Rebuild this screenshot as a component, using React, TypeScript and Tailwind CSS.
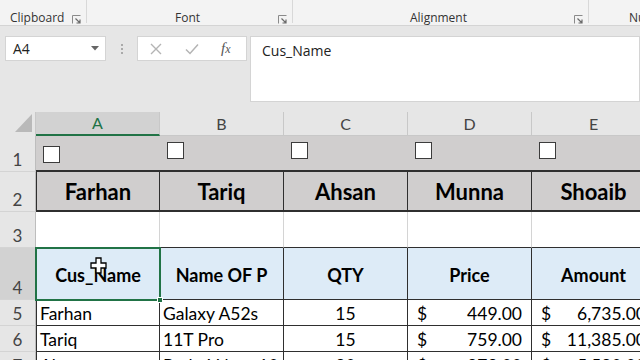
import React from "react";

const UI = { fontFamily: '"Open Sans", "Noto Sans", sans-serif' };
const CELL = { fontFamily: 'Lato, "Open Sans", sans-serif' };

function Launcher() {
  return (
    <svg width="9" height="9" viewBox="0 0 9 9" className="shrink-0">
      <path d="M0.5 8.5 V0.5 H8.5" fill="none" stroke="#8a8a8a" strokeWidth="1" />
      <path d="M3.5 3.5 L8 8 M8 4.5 V8 H4.5" fill="none" stroke="#6a6a6a" strokeWidth="1.2" />
    </svg>
  );
}

function Check() {
  return <div className="w-[17px] h-[17px] bg-white border border-[#3c3c3c]" />;
}

export default function App() {
  const dark = "border-[#2f2f2f]";
  const rowsData: { n: string; cells: string[] }[] = [
    { n: "5", cells: ["Farhan", "Galaxy A52s", "15", "449.00", "6,735.00"] },
    { n: "6", cells: ["Tariq", "11T Pro", "15", "759.00", "11,385.00"] },
    { n: "7", cells: ["Ahsan", "Redmi Note 10 Pro", "20", "279.00", "5,580.00"] },
  ];

  const rowHeader = (n: string, h: string, selected = false) => (
    <div
      className={`w-[36px] shrink-0 ${h} flex items-end justify-center pb-[1px] border-r border-b border-r-[#bdbdbd] border-b-[#d4d4d4] ${
        selected ? "bg-[#d2d2d2]" : "bg-[#e6e6e6]"
      } text-[#444] text-[17px] leading-[20px]`}
      style={CELL}
    >
      {n}
    </div>
  );

  return (
    <div className="w-[640px] h-[360px] overflow-hidden bg-[#e6e6e6] relative select-none">
      {/* Ribbon group labels */}
      <div className="h-[26px] bg-[#f3f3f3] border-b border-[#d4d4d4] flex items-start text-[12px] leading-[16px] text-[#333]" style={UI}>
        <div className="w-[87px] shrink-0 h-[23px] border-r border-[#d8d8d8] flex items-start pt-[10px] pl-[10px] pr-[5px] justify-between">
          <span>Clipboard</span>
          <div className="mt-[5px]"><Launcher /></div>
        </div>
        <div className="w-[206px] shrink-0 h-[23px] border-r border-[#d8d8d8] flex items-start pt-[10px] pr-[5px]">
          <span className="flex-1 text-center pl-[10px]">Font</span>
          <div className="mt-[5px]"><Launcher /></div>
        </div>
        <div className="w-[296px] shrink-0 h-[23px] border-r border-[#d8d8d8] flex items-start pt-[10px] pr-[5px]">
          <span className="flex-1 text-center pl-[10px]">Alignment</span>
          <div className="mt-[5px]"><Launcher /></div>
        </div>
        <div className="flex-1 flex items-start pt-[10px] pl-[40px] whitespace-nowrap">
          <span>Nu</span>
        </div>
      </div>

      {/* Formula bar */}
      <div className="h-[86px] flex items-start pt-[10px] pl-[5px]" style={UI}>
        <div className="w-[101px] h-[25px] bg-white border border-[#d4d4d4] flex items-center justify-between pl-[7px] pr-[6px] text-[14px] text-[#222]">
          <span>A4</span>
          <svg width="8" height="5" viewBox="0 0 8 5"><path d="M0 0 H8 L4 4.5 Z" fill="#666" /></svg>
        </div>
        <div className="w-[31px] h-[25px] flex flex-col items-center justify-center gap-[2px]">
          <div className="w-[2px] h-[2px] bg-[#aaa]" />
          <div className="w-[2px] h-[2px] bg-[#aaa]" />
          <div className="w-[2px] h-[2px] bg-[#aaa]" />
        </div>
        <div className="w-[110px] h-[25px] bg-white border border-[#d4d4d4] flex items-center pl-[12px]">
          <svg width="12" height="12" viewBox="0 0 12 12"><path d="M1 1 L11 11 M11 1 L1 11" stroke="#b4b4b4" strokeWidth="1.4" /></svg>
          <svg className="ml-[23px]" width="14" height="12" viewBox="0 0 14 12"><path d="M1 6.5 L5 10.5 L13 1.5" stroke="#b4b4b4" strokeWidth="1.5" fill="none" /></svg>
          <span className="ml-[22px] text-[15px] text-[#555] italic" style={{ fontFamily: '"Liberation Serif", serif' }}>
            f<span className="text-[12px]">x</span>
          </span>
        </div>
        <div className="ml-[3px] flex-1 h-[66px] bg-white border border-[#d4d4d4] pl-[11px] pt-[3px] text-[14px] text-[#222]">
          Cus_Name
        </div>
      </div>

      {/* Grid */}
      <div className="w-[640px] flex flex-col relative">
        {/* column headers */}
        <div className="flex h-[24px]">
          <div className="w-[36px] shrink-0 bg-[#e6e6e6] border-r border-[#c8c8c8] relative">
            <svg className="absolute right-[3px] bottom-[4px]" width="17" height="18" viewBox="0 0 17 18">
              <path d="M17 0 V18 H0 Z" fill="#b9b9b9" />
            </svg>
          </div>
          {["A", "B", "C", "D", "E"].map((c, i) => (
            <div
              key={c}
              className={`w-[124px] shrink-0 flex items-center justify-center text-[16px] border-r ${
                i === 0
                  ? "bg-[#d2d2d2] text-[#217346] border-b-2 border-b-[#217346] border-r-[#c8c8c8]"
                  : "bg-[#e6e6e6] text-[#444] border-b border-b-[#c8c8c8] border-r-[#c8c8c8]"
              }`}
              style={CELL}
            >
              {c}
            </div>
          ))}
        </div>

        {/* Row 1 */}
        <div className="flex h-[36px]">
          {rowHeader("1", "h-[36px]")}
          {[0, 1, 2, 3, 4].map((i) => (
            <div
              key={i}
              className={`w-[124px] shrink-0 bg-[#d0cece] border-b-2 ${dark} flex items-start pl-[7px] ${
                i === 0 ? "pt-[10px]" : "pt-[6px]"
              }`}
            >
              <Check />
            </div>
          ))}
        </div>

        {/* Row 2 */}
        <div className="flex h-[40px]">
          {rowHeader("2", "h-[40px]")}
          {["Farhan", "Tariq", "Ahsan", "Munna", "Shoaib"].map((t, i) => (
            <div
              key={t}
              className={`w-[124px] shrink-0 bg-[#d0cece] border-r border-b-2 ${dark} ${
                i === 0 ? "border-l" : ""
              } flex items-center justify-center pt-[2px] text-[22px] leading-[26px] font-bold text-black whitespace-nowrap`}
              style={CELL}
            >
              {t}
            </div>
          ))}
        </div>

        {/* Row 3 */}
        <div className="flex h-[36px]">
          {rowHeader("3", "h-[36px]")}
          {[0, 1, 2, 3, 4].map((i) => (
            <div key={i} className={`w-[124px] shrink-0 bg-white border-r border-r-[#d4d4d4] border-b ${dark}`} />
          ))}
        </div>

        {/* Row 4 */}
        <div className="flex h-[52px]">
          {rowHeader("4", "h-[52px]", true)}
          {["Cus_Name", "Name OF P", "QTY", "Price", "Amount"].map((t, i) => (
            <div
              key={t}
              className={`w-[124px] shrink-0 bg-[#ddebf7] border-r border-b ${dark} ${
                i === 0 ? "border-l" : ""
              } flex items-center justify-center pt-[3px] text-[18px] font-bold text-black whitespace-nowrap overflow-hidden`}
              style={CELL}
            >
              {t}
            </div>
          ))}
        </div>

        {/* Data rows */}
        {rowsData.map((r) => (
          <div key={r.n} className="flex h-[26px]">
            {rowHeader(r.n, "h-[26px]")}
            <div className={`w-[124px] shrink-0 bg-white border-l border-r border-b ${dark} flex items-end pl-[3px] text-[17.5px] leading-[22px] text-black whitespace-nowrap overflow-hidden`} style={CELL}>
              {r.cells[0]}
            </div>
            <div className={`w-[124px] shrink-0 bg-white border-r border-b ${dark} flex items-end pl-[3px] text-[17.5px] leading-[22px] text-black whitespace-nowrap overflow-hidden`} style={CELL}>
              {r.cells[1]}
            </div>
            <div className={`w-[124px] shrink-0 bg-white border-r border-b ${dark} flex items-end justify-center text-[17.5px] leading-[22px] text-black`} style={CELL}>
              {r.cells[2]}
            </div>
            <div className={`w-[124px] shrink-0 bg-white border-r border-b ${dark} flex items-end justify-between pl-[9px] pr-[9px] text-[17.5px] leading-[22px] text-black`} style={CELL}>
              <span>$</span>
              <span>{r.cells[3]}</span>
            </div>
            <div className={`w-[124px] shrink-0 bg-white border-r border-b ${dark} flex items-end justify-between pl-[9px] pr-[9px] text-[17.5px] leading-[22px] text-black whitespace-nowrap`} style={CELL}>
              <span>$</span>
              <span>{r.cells[4]}</span>
            </div>
          </div>
        ))}

        {/* Selection on A4 */}
        <div className="absolute left-[35px] top-[135px] w-[126px] h-[54px] border-2 border-[#217346] pointer-events-none" />
        <div className="absolute left-[157px] top-[185px] w-[6px] h-[6px] bg-[#217346] border border-white pointer-events-none" />

        {/* Cursor */}
        <svg className="absolute left-[90px] top-[145px]" width="17" height="17" viewBox="0 0 17 17">
          <path
            d="M6 1 H11 V6 H16 V11 H11 V16 H6 V11 H1 V6 H6 Z"
            fill="white"
            stroke="black"
            strokeWidth="1.3"
          />
        </svg>
      </div>
    </div>
  );
}
